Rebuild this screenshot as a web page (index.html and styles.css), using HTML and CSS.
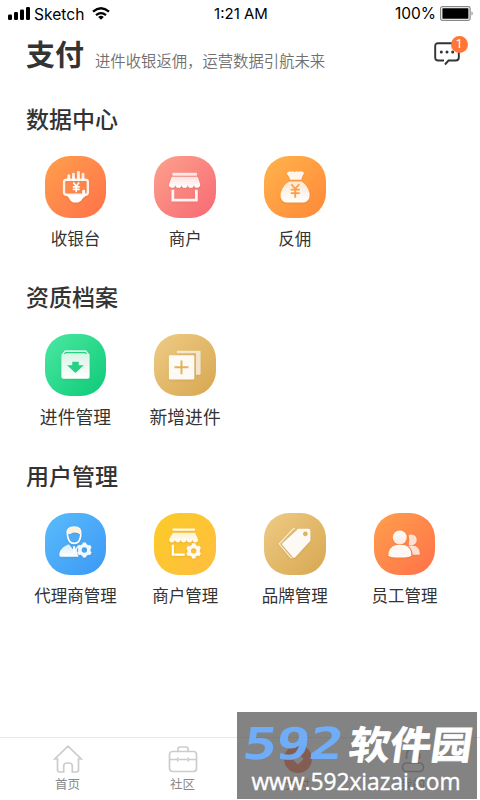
FILE: index.html
```html
<!DOCTYPE html>
<html lang="zh-CN">
<head>
<meta charset="utf-8">
<title>支付</title>
<link rel="stylesheet" href="styles.css">
</head>
<body>
<svg class="defs" aria-hidden="true">
  <defs>
    <linearGradient id="fade" x1="0" y1="0" x2="0" y2="1"><stop offset="0" stop-color="#fff" stop-opacity=".78"/><stop offset="1" stop-color="#fff"/></linearGradient>
    <linearGradient id="fall" x1="0" y1="0" x2="0" y2="1"><stop offset="0" stop-color="#fff"/><stop offset="1" stop-color="#fff" stop-opacity=".82"/></linearGradient>
    <g id="gear"><circle r="4.5" fill="none" stroke="#fff" stroke-opacity=".92" stroke-width="3.6"/><g fill="#fff" fill-opacity=".92"><rect id="tooth" x="-1.9" y="-7.6" width="3.8" height="2.2" rx=".7"/><use href="#tooth" transform="rotate(60)"/><use href="#tooth" transform="rotate(120)"/><use href="#tooth" transform="rotate(180)"/><use href="#tooth" transform="rotate(240)"/><use href="#tooth" transform="rotate(300)"/></g></g>
  </defs>
</svg>
<div class="app">
  <div class="status">
    <div class="carrier">
      <svg width="22" height="13" viewBox="0 0 22 13"><rect y="7.5" width="4" height="5.5" rx="1.2"/><rect x="6" y="5" width="4" height="8" rx="1.2"/><rect x="12" y="2.5" width="4" height="10.5" rx="1.2"/><rect x="18" width="4" height="13" rx="1.2"/></svg>
      <span class="carrier-name">Sketch</span>
      <svg class="wifi" width="18" height="13" viewBox="0 0 18 13"><path d="M1 4.7Q9-2.1 17 4.7" fill="none" stroke="#000" stroke-width="2.4"/><path d="M4 8.2Q9 3.9 14 8.2" fill="none" stroke="#000" stroke-width="2.2"/><path d="M6.2 9.9Q9 7.6 11.8 9.9L9 12.7Z"/></svg>
    </div>
    <span class="clock">1:21 AM</span>
    <div class="power"><span>100%</span>
      <svg width="34" height="15" viewBox="0 0 34 15"><rect x=".6" y=".6" width="29.5" height="13.8" rx="1.8" fill="none" stroke="#888" stroke-width="1.2"/><rect x="2.4" y="2.2" width="26" height="10.6" rx=".6"/><path d="M31.5 5.2Q34 7.4 31.5 9.6Z" fill="#888"/></svg>
    </div>
  </div>
  <header class="header">
    <h1>支付</h1><p>进件收银返佣，运营数据引航未来</p>
    <div class="message">
      <svg width="27" height="25" viewBox="0 0 27 25"><path d="M10 18.5H4.2Q1.2 18.5 1.2 15.5V4.2Q1.2 1.2 4.2 1.2H21.8Q24.8 1.2 24.8 4.2V15.5Q24.8 18.5 21.8 18.5H14.5L11 22.5" fill="none" stroke="#333" stroke-width="1.9"/><circle cx="7.3" cy="10" r="1.5" fill="#333"/><circle cx="13" cy="10" r="1.5" fill="#333"/><circle cx="18.7" cy="10" r="1.5" fill="#333"/></svg>
      <span class="badge">1</span>
    </div>
  </header>

  <section class="group">
    <h2>数据中心</h2>
    <div class="grid">
      <div class="item"><div class="tile orange"><svg viewBox="0 0 62 62"><path d="M24 24V20M28.7 24V18.5M33.7 24V16.7M38.3 24V18.5" stroke="#fff" stroke-opacity=".85" stroke-width="3" stroke-linecap="round"/><rect x="19.2" y="24" width="24" height="15" rx="2.5" fill="none" stroke="#fff" stroke-opacity=".88" stroke-width="2.4"/><path d="M21 39H41.5Q41 41 38 42.5Q36 47 31 47Q26 47 24 42Z" fill="#fff"/><path d="M39 39V35.5" stroke="#fff" stroke-width="3" stroke-linecap="round"/><path d="M28.6 26.8L31.5 30.5L34.4 26.8M28 31.2H35M28 33.6H35M31.5 30V36.5" fill="none" stroke="#fff" stroke-width="1.7"/></svg></div><span>收银台</span></div>
      <div class="item"><div class="tile pink"><svg viewBox="0 0 62 62"><rect x="18.5" y="17" width="25" height="2.8" rx="1" fill="#fff" fill-opacity=".8"/><path d="M19 21H43Q44 21 44.5 22.2L46.5 28.5A3.1 3.1 0 0 1 40.2 29A3.1 3.1 0 0 1 34 29A3.1 3.1 0 0 1 27.8 29A3.1 3.1 0 0 1 21.6 29A3.1 3.1 0 0 1 15.2 28.5L17.5 22.2Q18 21 19 21Z" fill="url(#fade)"/><path d="M19 34V44.5H42.7V34" fill="none" stroke="#fff" stroke-opacity=".92" stroke-width="2.8"/></svg></div><span>商户</span></div>
      <div class="item"><div class="tile amber"><svg viewBox="0 0 62 62"><path d="M26.5 24Q25.5 21 23 18Q23.8 15 27.5 16Q28.5 14.5 31 16.5Q32 14.5 34.5 16Q38 14.5 40.5 17Q38.5 20.5 37.5 24Z" fill="#fff" fill-opacity=".9"/><path d="M25.5 25.8H38Q44 30 45.8 37Q47 45 40.5 47H22Q15.5 45 17 37Q19 29.5 25.5 25.8Z" fill="url(#fade)"/><path d="M27.5 28.5L31.5 33L35.5 28.5M27 34H36M27 37.5H36M31.5 33V42" fill="none" stroke="#ff9b40" stroke-width="1.8"/></svg></div><span>反佣</span></div>
    </div>
  </section>

  <section class="group large">
    <h2>资质档案</h2>
    <div class="grid">
      <div class="item"><div class="tile green"><svg viewBox="0 0 62 62"><path d="M20 16.5H41.5L45 21V43Q45 45 43 45H18.5Q16.5 45 16.5 43V21Z" fill="url(#fade)"/><path d="M19.5 20L21 18.7H40.5L42 20" fill="none" stroke="#24d283" stroke-width="1.3"/><path d="M27.5 28H34V31.5H39L30.7 39.3L22.3 31.5H27.5Z" fill="#26d184"/></svg></div><span>进件管理</span></div>
      <div class="item"><div class="tile gold"><svg viewBox="0 0 62 62"><path d="M23 19.5V17.8Q23 17 23.8 17H46.2Q47 17 47 17.8V40.2Q47 41 46.2 41H42.3V19.5Z" fill="#fff" fill-opacity=".68"/><rect x="15" y="21.3" width="25.6" height="24.5" rx="1.3" fill="#fff" fill-opacity=".94"/><path d="M20.7 33.6H34.7M27.7 26.6V40.6" stroke="#e0b25d" stroke-width="2"/></svg></div><span>新增进件</span></div>
    </div>
  </section>

  <section class="group">
    <h2>用户管理</h2>
    <div class="grid">
      <div class="item"><div class="tile blue"><svg viewBox="0 0 62 62"><path d="M22.6 21Q21.5 14.2 29.5 14.2Q37.2 14.2 36 22.5Q35.4 30.6 29.3 30.6Q23.6 30.6 22.6 22Z" fill="none" stroke="#fff" stroke-width="1.7"/><path d="M22.4 21Q21.5 14 29.5 14Q37 14 36.2 22Q31 18.5 28 20Q25 22 22.4 21Z" fill="#fff2dd"/><path d="M24 31.5L29 37.5L33.7 32Q31 38 33.8 44H16Q14 44 14.5 41Q15.5 34.5 24 31.5Z" fill="url(#fade)"/><path d="M29.3 33.5V40" stroke="#fff" stroke-width="2"/><use href="#gear" transform="translate(39.7 37.3)"/></svg></div><span>代理商管理</span></div>
      <div class="item"><div class="tile yellow"><svg viewBox="0 0 62 62"><rect x="18.5" y="15.6" width="23" height="2.3" rx=".8" fill="#fff" fill-opacity=".9"/><path d="M19 20H41.5L44.6 27A3 3 0 0 1 38.7 27.3A3 3 0 0 1 32.8 27.3A3 3 0 0 1 26.9 27.3A3 3 0 0 1 21 27.3A3 3 0 0 1 15.1 27Z" fill="url(#fade)"/><path d="M19 32V42H31" fill="none" stroke="#fff" stroke-width="2.2"/><use href="#gear" transform="translate(40 38.2)"/></svg></div><span>商户管理</span></div>
      <div class="item"><div class="tile gold"><svg viewBox="0 0 62 62"><path d="M31 16H29.5L15.3 31L27 45H28.5" fill="none" stroke="#fff" stroke-opacity=".8" stroke-width="1.1"/><path fill-rule="evenodd" d="M34.5 16H45.5L46.8 17.3V28L31.5 44.5Q30 45.8 28.8 44.3L18.5 32.2Q17.8 31.2 18.6 30.4ZM41.7 18.7a2.4 2.4 0 1 0 .01 0Z" fill="#fff" fill-opacity=".94"/></svg></div><span>品牌管理</span></div>
      <div class="item"><div class="tile orange"><svg viewBox="0 0 62 62"><g fill="#fff" fill-opacity=".76"><path d="M35 22.3A5.5 5.5 0 1 1 35 32Q36.2 27 35 22.3Z"/><path d="M34.5 33.3Q45.5 31 46.3 41Q46.3 42 45 42H39Q38.5 36 34.5 33.3Z"/></g><circle cx="26" cy="24.7" r="7" fill="url(#fall)"/><path d="M22 32.3H30.5Q37.6 34.5 37.6 42.5Q37.6 44.8 26 44.8Q14.5 44.8 14.5 42.5Q14.8 34.5 22 32.3Z" fill="#fff" fill-opacity=".94"/></svg></div><span>员工管理</span></div>
    </div>
  </section>

  <nav class="tabs">
    <div class="tab"><svg viewBox="0 0 30 30"><path d="M4.5 15H1.8L15 2.2L28.2 15H25.5V25.8Q25.5 28 23.3 28H19.3V22Q19.3 19 16.3 19H13.7Q10.7 19 10.7 22V28H6.7Q4.5 28 4.5 25.8Z"/></svg><span>首页</span></div>
    <div class="tab"><svg viewBox="0 0 30 30"><rect x="1.5" y="7.5" width="27" height="20" rx="3"/><path d="M10 7V5Q10 3 12 3H18Q20 3 20 5V7M2 15.5H9M11 15.5H19M21 15.5H28M9.8 13.5V17.5M20.2 13.5V17.5"/></svg><span>社区</span></div>
    <div class="tab active"><svg viewBox="0 0 30 30"><circle cx="15" cy="15" r="14"/><path d="M15 9.5L20.5 15L15 20.5L9.5 15Z"/></svg><span>支付</span></div>
    <div class="tab last"><svg viewBox="0 0 30 30"><path d="M8.5 15V11Q8.5 5 15 5Q21.5 5 21.5 11V15"/><rect x="4.5" y="19" width="21" height="8.5" rx="4"/></svg><span>我的</span></div>
  </nav>
  <div class="watermark">
    <div class="brand"><span class="digits">592</span><span class="name">软件园</span></div>
    <div class="url">www.592xiazai.com</div>
  </div>
</div>
</body>
</html>
```
FILE: styles.css
```css
* { box-sizing: border-box; }
body { margin: 0; background: #fff; color: #333; font-family: "Noto Sans CJK SC", sans-serif; }
h1, h2, p { margin: 0; }
svg { display: block; flex: none; }
.defs { position: absolute; width: 0; height: 0; }
.app { position: relative; width: 480px; height: 800px; overflow: hidden; display: flex; flex-direction: column; }
.status { height: 27px; display: grid; grid-template-columns: 1fr auto 1fr; align-items: center; padding: 0 6px 0 8px; color: #000; font: 15.5px/27px Inter, sans-serif; }
.carrier, .power { display: flex; align-items: center; }
.carrier { gap: 4px; font-size: 15.6px; }
.carrier-name { position: relative; top: 1px; }
.clock { font-size: 15px; }
.wifi { margin-left: 4px; }
.power { justify-content: flex-end; gap: 4px; }
.header { height: 66px; display: flex; align-items: flex-start; padding: 0 19.5px 0 26px; }
h1 { font-size: 29px; line-height: 52px; font-weight: 700; }
.header p { margin-left: 11px; font-size: 15.35px; line-height: 67px; color: #707070; font-weight: 350; }
.message { position: relative; margin: 15px 0 0 auto; }
.badge { position: absolute; left: 17px; top: -6px; width: 17px; height: 17px; border-radius: 50%; background: #ff7637; color: #fff; font: 12px/17px Roboto, sans-serif; text-align: center; }
.group { height: 178.5px; }
h2 { margin-left: 26px; font-size: 23px; line-height: 50px; font-weight: 500; }
.grid { display: grid; grid-template-columns: repeat(4, 109.7px); margin: 13px 0 0 20.6px; }
.item { display: flex; flex-direction: column; align-items: center; white-space: nowrap; font-size: 16.5px; line-height: 24px; }
.item span { margin-top: 8px; }
.large h2 { line-height: 48px; }
.large .grid { margin-top: 14.5px; }
.large .item { font-size: 17.8px; }
.tile { width: 61.5px; height: 61.5px; border-radius: 25px; }
.tile svg { width: 61.5px; height: 61.5px; filter: drop-shadow(0 1px 1px rgb(100 50 0 / 12%)); }
.orange { background: linear-gradient(135deg, #ff9f4c, #ff714a); }
.pink { background: linear-gradient(135deg, #fca28d, #f86872); }
.amber { background: linear-gradient(135deg, #ffb44c, #ff8738); }
.green { background: linear-gradient(135deg, #4be8a2, #0dca77); }
.gold { background: linear-gradient(135deg, #eecb85, #d7a750); }
.blue { background: linear-gradient(135deg, #59bcfc, #3c98f5); }
.yellow { background: linear-gradient(135deg, #fbcc27, #ffbd40); }
.tabs { margin-top: auto; height: 63px; flex: none; border-top: 1px solid #e8e8e8; display: grid; grid-template-columns: repeat(4, 115px); padding-left: 10px; }
.tab { display: flex; flex-direction: column; align-items: center; padding-top: 6px; font-size: 12.5px; line-height: 18px; color: #888; }
.tab svg { width: 30px; height: 30px; fill: none; stroke: #ccc; stroke-width: 1.7; }
.tab span { margin-top: 1px; }
.active { color: #ff714a; }
.active circle { fill: #ff6a3a; stroke: none; }
.active path { fill: #fff; stroke: none; }
.last svg { stroke: #999; }
.watermark { position: absolute; left: 237px; top: 712px; width: 240px; height: 87px; background: rgb(90 90 90 / 75%); color: #fff; }
.brand { display: flex; height: 58px; align-items: center; padding: 8px 0 0 6px; white-space: nowrap; }
.digits { width: 106px; color: rgb(110 175 255 / 94%); font: 700 44px/48px "DejaVu Sans Mono", monospace; letter-spacing: -1px; transform-origin: left; transform: translate(0, -1px) skewX(-8deg) scaleX(1.3); }
.name { font-weight: 700; font-size: 41px; line-height: 48px; transform: translate(1px, -3px) skewX(-8deg) scaleY(.94); -webkit-text-stroke: .8px #fff; }
.url { margin-top: -1px; text-align: center; font: 500 23px/24px "Open Sans", sans-serif; -webkit-text-stroke: .4px #fff; transform: translateX(-1px) scaleX(.99); }
```
